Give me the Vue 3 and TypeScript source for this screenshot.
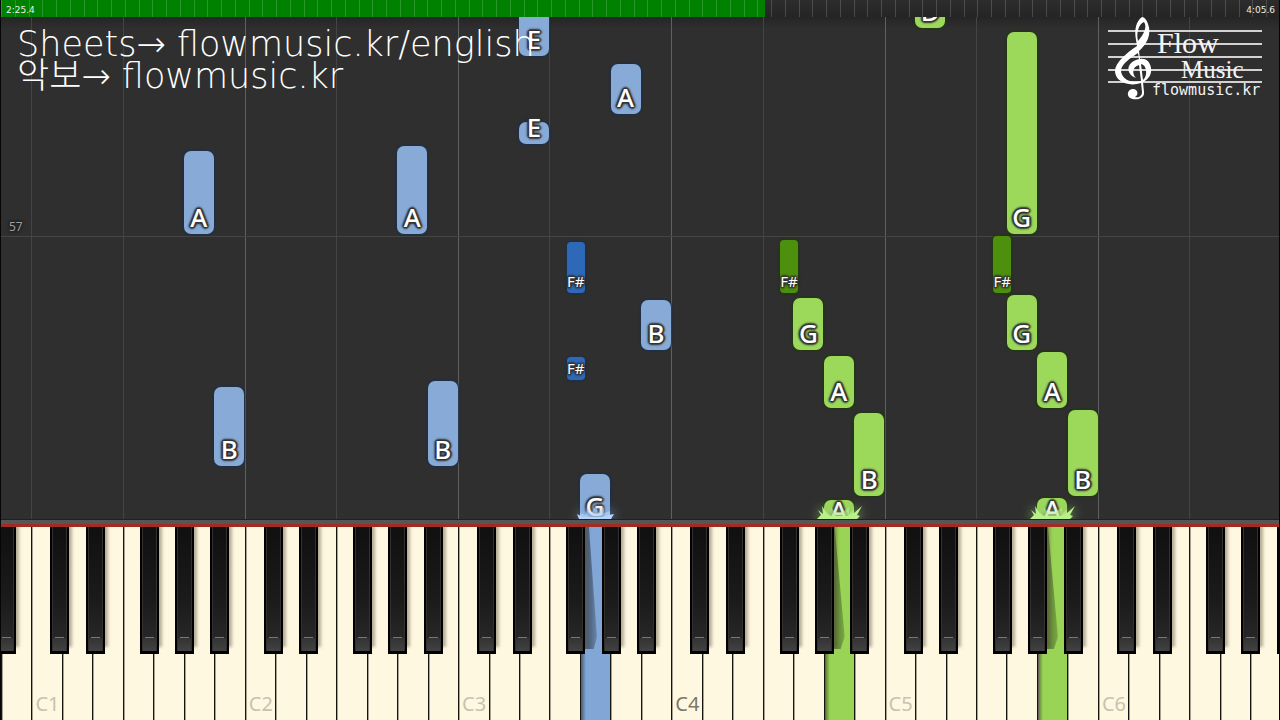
<script setup lang="ts">
type Hand = 'left' | 'right'

interface Note {
  key: number
  name: string
  top: number
  bottom: number
  hand: Hand
  sounding?: boolean
}

interface WhiteKey {
  index: number
  label: string
  sharp: string
  pressed: Hand | ''
  lane: string
}

const KEY_COUNT = 42
const LANE_HEIGHT = 502
const MEASURES = 93
const progress = 59.7

const letters = ['C', 'D', 'E', 'F', 'G', 'A', 'B']
const pressed: Record<number, Hand> = { 19: 'left', 27: 'right', 34: 'right' }

const keys: WhiteKey[] = Array.from({ length: KEY_COUNT }, (_, index) => {
  const letter = letters[(index + 6) % 7]
  const octave = Math.floor((index + 6) / 7)
  return {
    index,
    label: letter === 'C' ? `C${octave}` : '',
    sharp: 'CDFGA'.includes(letter) ? letter.toLowerCase() : '',
    pressed: pressed[index] ?? '',
    lane: letter === 'C' && index > 1 ? 'octave' : letter === 'F' || index === 1 ? 'split' : '',
  }
})

const notes: Note[] = [
  { key: 17, name: 'E', top: -20, bottom: 39, hand: 'left' },
  { key: 20, name: 'A', top: 47, bottom: 97, hand: 'left' },
  { key: 17, name: 'E', top: 105, bottom: 127, hand: 'left' },
  { key: 6, name: 'A', top: 134, bottom: 217, hand: 'left' },
  { key: 13, name: 'A', top: 129, bottom: 217, hand: 'left' },
  { key: 7, name: 'B', top: 370, bottom: 449, hand: 'left' },
  { key: 14, name: 'B', top: 364, bottom: 449, hand: 'left' },
  { key: 18, name: 'F#', top: 225, bottom: 276, hand: 'left' },
  { key: 21, name: 'B', top: 283, bottom: 333, hand: 'left' },
  { key: 18, name: 'F#', top: 340, bottom: 363, hand: 'left' },
  { key: 19, name: 'G', top: 457, bottom: 506, hand: 'left', sounding: true },
  { key: 30, name: 'D', top: -20, bottom: 11, hand: 'right' },
  { key: 33, name: 'G', top: 15, bottom: 217, hand: 'right' },
  { key: 25, name: 'F#', top: 223, bottom: 276, hand: 'right' },
  { key: 32, name: 'F#', top: 219, bottom: 276, hand: 'right' },
  { key: 26, name: 'G', top: 281, bottom: 333, hand: 'right' },
  { key: 33, name: 'G', top: 278, bottom: 333, hand: 'right' },
  { key: 27, name: 'A', top: 339, bottom: 391, hand: 'right' },
  { key: 34, name: 'A', top: 335, bottom: 391, hand: 'right' },
  { key: 28, name: 'B', top: 396, bottom: 479, hand: 'right' },
  { key: 35, name: 'B', top: 393, bottom: 479, hand: 'right' },
  { key: 27, name: 'A', top: 483, bottom: 510, hand: 'right', sounding: true },
  { key: 34, name: 'A', top: 481, bottom: 509, hand: 'right', sounding: true },
]

const isSharp = (note: Note) => note.name.endsWith('#')

function place(note: Note) {
  const column = note.key + (isSharp(note) ? 0.56 : 0)
  return {
    left: `${(column / KEY_COUNT) * 100}%`,
    top: `${(note.top / LANE_HEIGHT) * 100}%`,
    height: `${((note.bottom - note.top) / LANE_HEIGHT) * 100}%`,
  }
}

const sparks = notes.filter((note) => note.sounding)
const sparkPlace = (note: Note) => ({ left: `${((note.key + 0.5) / KEY_COUNT) * 100}%` })
</script>

<template>
  <main class="player">
    <header class="timeline">
      <div class="played" :style="{ width: progress + '%' }"></div>
      <div class="measures"><i v-for="n in MEASURES" :key="n"></i></div>
      <div class="times"><time>2:25.4</time><time>4:05.6</time></div>
    </header>

    <section class="roll">
      <div class="lanes">
        <i v-for="key in keys" :key="key.index" :class="key.lane"></i>
      </div>
      <div class="barline"><span>57</span></div>
      <div class="notes">
        <div
          v-for="(note, i) in notes"
          :key="i"
          class="note"
          :class="[note.hand, { sharp: isSharp(note) }]"
          :style="place(note)"
        >
          <span>{{ note.name }}</span>
        </div>
        <svg
          v-for="note in sparks"
          :key="note.key"
          class="spark"
          :class="note.hand"
          :style="sparkPlace(note)"
          viewBox="0 0 50 26"
          aria-hidden="true"
        >
          <template v-if="note.hand === 'right'">
            <path
              class="flame"
              d="M10 26 L11 18 L16 22 L17 14 L22 21 L28 20 L35 14 L35 21 L40 16 L40 26 Z"
            />
            <path d="M3 26 L7 22 L4 17 L9 21 L8 13 L13 21 L17 23 L33 23 L40 20 L48 13 L43 22 L46 23 L43 26 Z" />
          </template>
          <template v-else>
            <path
              class="flame"
              d="M10 26 L10 20 L16 22 L17 14 L21 21 L26 12 L28 20 L34 14 L34 20 L40 18 L40 26 Z"
            />
            <path d="M9 26 L7 21 L13 24 L20 24 L33 24 L38 22 L44 21 L41 26 Z" />
          </template>
        </svg>
      </div>
      <div class="credits">
        <p>Sheets→ flowmusic.kr/english</p>
        <p>악보→ flowmusic.kr</p>
      </div>
      <svg class="logo" viewBox="0 0 160 84" role="img" aria-label="Flow Music">
        <g class="staff">
          <path d="M5 14H159M5 27H159M5 40H159M5 53H159M5 65H159" />
        </g>
        <path
          class="clef"
          fill-rule="evenodd"
          d="M39 0 C33 4 31 13 33 23 L34 29 C23 36 12 46 12 54 C12 61 18 66 26 67 C30 68 34 67 38 66 L39 75 C39 79 36 81 32 80 C36 78 35 72 30 72 C25 72 23 78 27 81 C32 84 42 82 41 75 L40 65 C46 62 49 57 48 51 C47 44 42 41 37 42 L36 34 C44 27 49 17 45 7 C44 4 42 0 39 0 Z M41 5 C44 9 42 16 35 24 C33 15 36 7 41 5 Z M35 36 L36 42 C27 44 24 50 26 55 C27 58 30 60 33 61 C29 57 29 50 36 48 L38 64 C26 67 18 61 18 53 C19 47 27 41 35 36 Z M38 47 C44 48 45 59 40 63 Z"
        />
        <text class="script large" x="54" y="36">Flow</text>
        <text class="script" x="78" y="61">Music</text>
        <text class="site" x="49" y="78">flowmusic.kr</text>
      </svg>
    </section>

    <div class="rail"></div>

    <section class="keyboard">
      <div
        v-for="key in keys"
        :key="key.index"
        class="white"
        :class="[key.pressed, { middle: key.label === 'C4' }]"
      >
        <div v-if="key.pressed" class="shade"></div>
        <span v-if="key.label">{{ key.label }}</span>
        <div v-if="key.sharp" class="black" :class="key.sharp"><i></i></div>
      </div>
      <div class="black edge"><i></i></div>
    </section>
  </main>
</template>

<style>
body {
  margin: 0;
  background: #000;
}
</style>

<style scoped>
.player {
  position: relative;
  height: 100vh;
  display: flex;
  flex-direction: column;
  overflow: hidden;
  background: #2e2e2e;
  border-left: 1px solid #050505;
  box-sizing: border-box;
  font-family: "Noto Sans", "Noto Sans CJK KR", sans-serif;
}

.player::after {
  content: "";
  position: absolute;
  z-index: 2;
  inset: 0 0 0 auto;
  width: 1px;
  background: #050505;
}

.timeline {
  position: relative;
  flex: 0 0 17px;
  background: linear-gradient(#2d2d2d, #242424);
}

.played {
  height: 100%;
  background: #008200;
}

.measures {
  position: absolute;
  inset: 0;
  display: flex;
}

.measures i {
  flex: 1;
  border-left: 1px solid rgba(255, 255, 255, 0.16);
}

.times {
  position: absolute;
  inset: 0;
  display: flex;
  justify-content: space-between;
  padding: 0 5px;
  color: #e8f0e8;
  font-family: "DejaVu Sans", sans-serif;
  font-size: 9px;
  line-height: 20px;
}

.roll {
  position: relative;
  flex: 1;
  margin-right: -1px;
  overflow: hidden;
  background: linear-gradient(#252525, #2f2f2f 12px);
}

.lanes {
  position: absolute;
  inset: 0;
  display: flex;
}

.lanes i {
  flex: 1;
  box-sizing: border-box;
  border-left: 1px solid transparent;
}

.lanes i.octave {
  border-color: #606060;
}

.lanes i.split {
  border-color: #444;
}

.barline {
  position: absolute;
  top: 0;
  left: 0;
  right: 0;
  height: 43.6%;
  display: flex;
  align-items: flex-end;
  border-bottom: 1px solid #454545;
}

.barline span {
  padding-left: 8px;
  color: #a0a0a0;
  font-size: 12px;
  line-height: 18px;
  text-shadow: 0 0 3px #111, 0 0 3px #111;
}

.notes {
  position: absolute;
  inset: 0;
}

.note {
  position: absolute;
  width: 30px;
  display: flex;
  align-items: flex-end;
  justify-content: center;
  box-sizing: border-box;
  border-radius: 7px;
  color: #fff;
  font-size: 26px;
  font-weight: 500;
  line-height: 34px;
  text-shadow: -1px -1px 1px #333, 1px -1px 1px #333, -1px 1px 1px #333, 1px 1px 1px #333,
    0 2px 2px #333, 2px 0 2px #333, -2px 0 2px #333, 0 -2px 2px #333;
}

.note.left {
  background: #87aad7;
  box-shadow: 0 0 2px 1px #1d304b;
}

.note.right {
  background: #9cd95b;
  box-shadow: 0 0 2px 1px #22380f;
}

.note.sharp {
  width: 18px;
  border-radius: 4px;
  font-size: 15px;
  font-weight: 400;
  line-height: 24px;
}

.note.left.sharp {
  background: #2e69b8;
}

.note.right.sharp {
  background: #4d900d;
}

.spark {
  position: absolute;
  bottom: 0;
  width: 50px;
  height: 26px;
  margin-left: -25px;
  overflow: visible;
}

.spark .flame {
  opacity: 0.6;
}

.spark.left {
  fill: #b4d5fb;
  filter: drop-shadow(0 0 6px #8fb4e4);
}

.spark.right {
  fill: #b8f08a;
  filter: drop-shadow(0 0 6px #96c870);
}

.credits {
  position: absolute;
  top: 11px;
  left: 16px;
  color: #fff;
  font-family: "DejaVu Sans", "Noto Sans CJK KR", sans-serif;
  font-size: 35px;
  font-weight: 200;
  line-height: 32px;
}

.credits p {
  margin: 0;
  white-space: nowrap;
}

.logo {
  position: absolute;
  top: 0;
  right: 18px;
  width: 160px;
  height: 84px;
}

.staff {
  stroke: #d2d2d2;
  stroke-width: 2;
}

.clef {
  fill: #fff;
}

.logo text {
  fill: #f4f4f4;
}

.script {
  font-family: "Liberation Serif", serif;
  font-size: 25px;
}

.script.large {
  font-size: 30px;
}

.site {
  font-family: "DejaVu Sans Mono", monospace;
  font-size: 15px;
}

.rail {
  flex: 0 0 8px;
  box-sizing: border-box;
  border-top: 1px solid #202020;
  border-bottom: 3px solid #a22c22;
  background: #565656;
}

.keyboard {
  position: relative;
  flex: 0 0 193px;
  display: flex;
  margin-right: -1px;
  overflow: hidden;
}

.white {
  position: relative;
  flex: 1;
  box-sizing: border-box;
  border-left: 1px solid #16140f;
  background: #fff8e1;
  box-shadow: inset 1px 0 #a8a292;
}

.white.left {
  background: #82a6d5;
}

.white.right {
  background: #9ad456;
}

.white span {
  position: absolute;
  bottom: 2px;
  left: 3px;
  color: #c9c1b0;
  font-size: 20px;
  line-height: 28px;
}

.white.middle span {
  color: #7c766c;
}

.shade {
  position: absolute;
  inset: 0;
  background:
    linear-gradient(90deg, rgba(0, 0, 0, 0.45), transparent) 0 100% / 5px 66px no-repeat;
}

.shade::before {
  content: "";
  position: absolute;
  top: 0;
  left: 0;
  width: 16px;
  height: 122px;
  background: linear-gradient(90deg, rgba(0, 0, 0, 0.4) 50%, rgba(0, 0, 0, 0.2));
  clip-path: polygon(0 0, 50% 0, 100% 90%, 80% 100%, 0 100%);
}

.white.right .shade::before {
  width: 20px;
}

.black {
  position: absolute;
  z-index: 1;
  top: 0;
  width: 19px;
  height: 127px;
  box-sizing: border-box;
  padding: 0 2px 3px;
  background: #000;
  box-shadow: 3px -7px 3px rgba(90, 80, 60, 0.45);
}

.black i {
  display: block;
  height: 100%;
  box-sizing: border-box;
  border: solid #34312c;
  border-width: 0 1px;
  background:
    linear-gradient(#777, #777) 50% 110px / 9px 1px no-repeat,
    linear-gradient(#333, #424242) 0 111px / 100% 13px no-repeat,
    linear-gradient(#101010, #1b1b1b 60%, #2b2b2b);
}

.black.c { left: 61%; }
.black.d { left: 79%; }
.black.f { left: 54%; }
.black.g { left: 70%; }
.black.a { left: 87%; }
.black.edge { left: -4px; }
</style>
